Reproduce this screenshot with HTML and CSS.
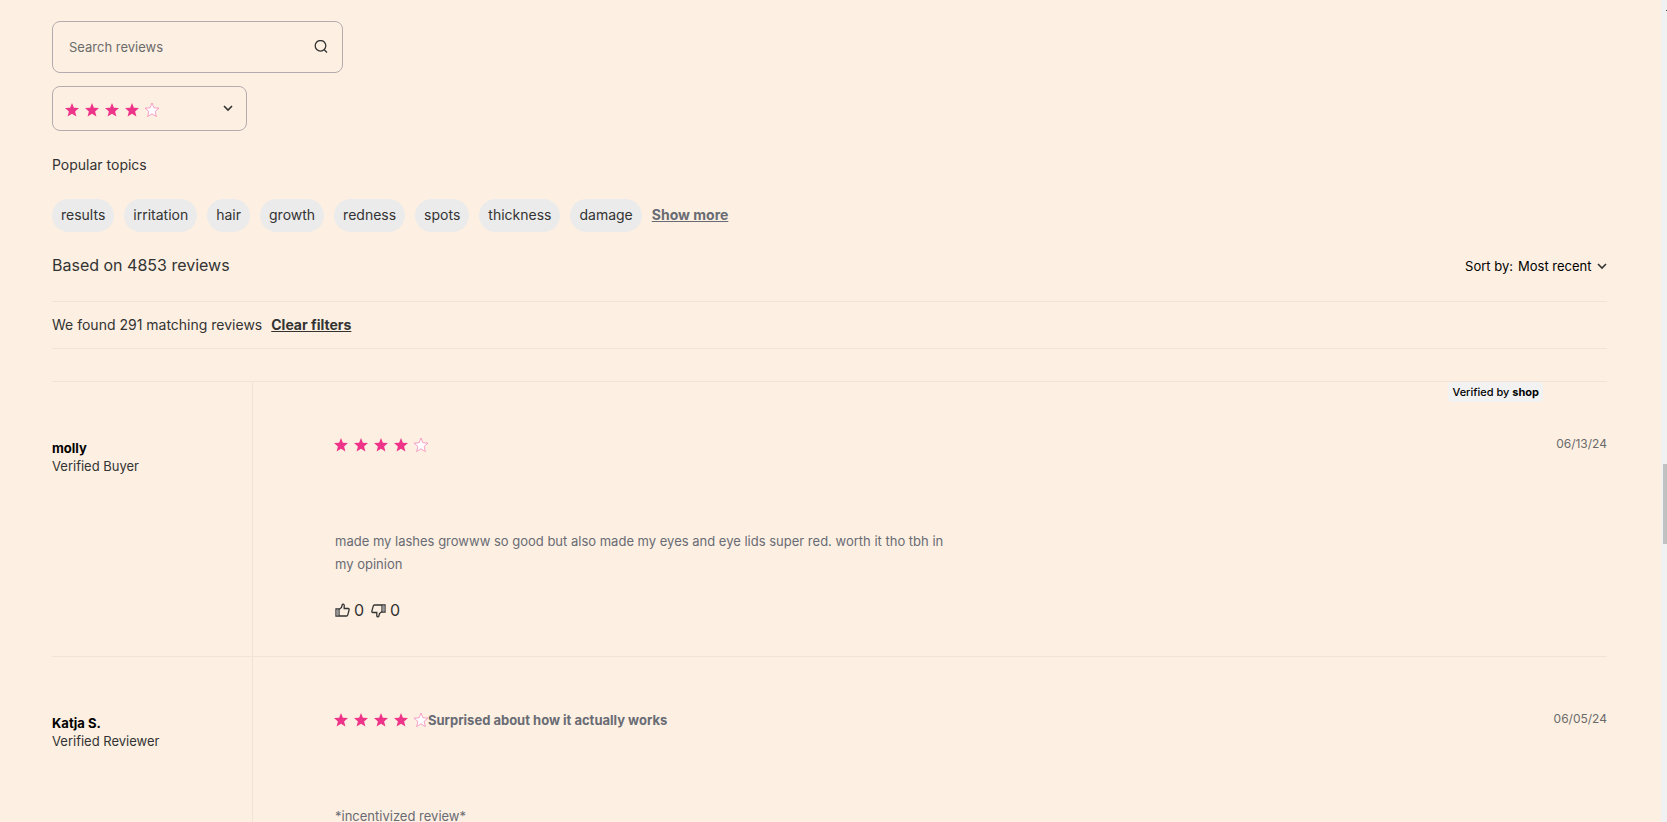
FILE: index.html
```html
<!DOCTYPE html>
<html lang="en">
<head>
<meta charset="UTF-8">
<meta name="viewport" content="width=device-width, initial-scale=1.0">
<title>Reviews</title>
<link rel="stylesheet" href="styles.css">
</head>
<body>
<svg class="defs" aria-hidden="true">
    <symbol id="star" viewBox="0 0 14 14"><path d="M7 0 8.9 4.8 14 5.1 10.1 8.4 11.4 13.6 7 10.8 2.6 13.6 3.9 8.4 0 5.1 5.1 4.8Z"/></symbol>
    <symbol id="thumb" viewBox="0 0 15 15"><path d="M1 6H4V13H1ZM4 6.5 6.5 4.5 7.3 1.5C7.6.8 9.2 1 9.2 2.3V5.5H13.2C14 5.5 14.3 6 14.1 6.8L12.8 11.8C12.6 12.6 12.2 13 11.5 13H4"/><path class="cuff" d="M1.5 6.5H3.5V12.5H1.5Z"/></symbol>
    <symbol id="chevron" viewBox="0 0 10 10"><path d="M1 3 5 7 9 3"/></symbol>
</svg>
<div class="page">
    <main class="reviews">
        <!-- filters -->
        <form class="filters">
            <div class="search">
                <input type="search" placeholder="Search reviews" aria-label="Search reviews">
                <button type="button" aria-label="Search">
                    <svg width="14" height="14" viewBox="0 0 14 14"><circle cx="6.5" cy="5.8" r="5.3"/><path d="M10.3 9.8 13 12.5"/></svg>
                </button>
            </div>
            <div class="rating">
                <select aria-label="Rating">
                    <option>5 stars</option>
                    <option selected>4 stars</option>
                    <option>3 stars</option>
                    <option>2 stars</option>
                    <option>1 star</option>
                </select>
                <span class="rating-value">
                    <span class="stars"><svg><use href="#star"/></svg><svg><use href="#star"/></svg><svg><use href="#star"/></svg><svg><use href="#star"/></svg><svg class="empty"><use href="#star"/></svg></span>
                    <svg class="chevron"><use href="#chevron"/></svg>
                </span>
            </div>
        </form>

        <h2>Popular topics</h2>
        <div class="topics">
            <button type="button">results</button>
            <button type="button">irritation</button>
            <button type="button">hair</button>
            <button type="button">growth</button>
            <button type="button">redness</button>
            <button type="button">spots</button>
            <button type="button">thickness</button>
            <button type="button">damage</button>
            <a href="#">Show more</a>
        </div>

        <div class="summary">
            <p>Based on 4853 reviews</p>
            <div class="sort">
                <label for="sort">Sort by:</label>
                <select id="sort">
                    <option>Most recent</option>
                </select>
                <svg class="chevron"><use href="#chevron"/></svg>
            </div>
        </div>
        <div class="found">
            <span>We found 291 matching reviews</span>
            <a href="#">Clear filters</a>
        </div>

        <!-- review list -->
        <div class="list">
            <article class="review">
                <div class="author">
                    <h3>molly</h3>
                    <p>Verified Buyer</p>
                </div>
                <div class="content">
                    <span class="badge">Verified by <b>shop</b></span>
                    <div class="head">
                        <span class="stars" role="img" aria-label="4 out of 5"><svg><use href="#star"/></svg><svg><use href="#star"/></svg><svg><use href="#star"/></svg><svg><use href="#star"/></svg><svg class="empty"><use href="#star"/></svg></span>
                        <time datetime="2024-06-13">06/13/24</time>
                    </div>
                    <p class="text">made my lashes growww so good but also made my eyes and eye lids super red. worth it tho tbh in my opinion</p>
                    <div class="votes">
                        <button type="button" aria-label="Helpful"><svg><use href="#thumb"/></svg>0</button>
                        <button type="button" aria-label="Not helpful"><svg class="down"><use href="#thumb"/></svg>0</button>
                    </div>
                </div>
            </article>
            <article class="review">
                <div class="author">
                    <h3>Katja S.</h3>
                    <p>Verified Reviewer</p>
                </div>
                <div class="content">
                    <div class="head">
                        <span class="stars" role="img" aria-label="4 out of 5"><svg><use href="#star"/></svg><svg><use href="#star"/></svg><svg><use href="#star"/></svg><svg><use href="#star"/></svg><svg class="empty"><use href="#star"/></svg></span>
                        <h4>Surprised about how it actually works</h4>
                        <time datetime="2024-06-05">06/05/24</time>
                    </div>
                    <p class="text">*incentivized review*</p>
                </div>
            </article>
        </div>
    </main>
    <div class="scrollbar"><div class="arrow"></div><div class="thumb"></div></div>
</div>
</body>
</html>
```
FILE: styles.css
```css
* {box-sizing:border-box;}
body {margin:0;background:#fdf0e2;color:#333;font-family:"ITC Avant Garde Gothic","Century Gothic","Inter","Liberation Sans",sans-serif;font-size:14px;line-height:18px;}
h2,h3,h4,p {margin:0;font-size:inherit;font-weight:normal;}
button,input,select {font:inherit;color:inherit;background:none;border:none;padding:0;margin:0;}
button,select {cursor:pointer;}
select {appearance:none;}
a {color:inherit;font-weight:bold;text-decoration:underline;}
.defs {position:absolute;width:0;height:0;}

.page {display:flex;height:100vh;overflow:hidden;}
.reviews {flex:1;padding:21px 54px 0 52px;}

/* filters */
.filters {display:flex;flex-direction:column;gap:13px;}
.search {display:flex;align-items:center;width:291px;height:52px;padding:0 14px 0 16px;border:1px solid #b4abae;border-radius:8px;}
.search input {flex:1;min-width:0;font-size:13px;outline:none;}
.search input::placeholder {color:#6b6b6b;opacity:1;}
.search svg {display:block;fill:none;stroke:#333;stroke-width:1.3;}
.rating {position:relative;width:195px;height:45px;}
.rating select {width:100%;height:100%;border:1px solid #b4abae;border-radius:8px;color:transparent;}
.rating option {color:#333;}
.rating-value {position:absolute;inset:0;display:flex;align-items:flex-start;justify-content:space-between;padding:17px 14px 0 13px;pointer-events:none;}
.stars {display:flex;gap:6px;}
.stars svg {width:14px;height:14px;fill:#ee3488;}
.stars .empty {fill:#fff;stroke:#f48abb;stroke-width:.8;overflow:visible;}
.chevron {width:10px;height:10px;fill:none;stroke:#333;stroke-width:1.6;}

/* topics */
h2 {margin-top:25px;}
.topics {display:flex;align-items:center;gap:10px;margin-top:25px;}
.topics button {height:33px;padding:0 9px 2px;border-radius:17px;background:#ebebeb;}
.topics a {padding-bottom:2px;color:#696b74;}

.summary {display:flex;align-items:baseline;justify-content:space-between;height:47px;margin-top:22px;padding-top:2px;}
.summary p {font-size:16px;}
.sort {display:flex;align-items:center;gap:5px;font-size:13px;color:#000;}
.found {display:flex;align-items:center;gap:9px;height:48px;border-top:1px solid #f0e4d8;border-bottom:1px solid #f0e4d8;}

/* review list */
.list {margin-top:32px;}
.review {display:flex;height:275px;border-top:1px solid #f0e4d8;}
.author {width:201px;padding-top:57px;border-right:1px solid #f0e4d8;font-size:13px;}
.author h3 {font-weight:bold;color:#000;}
.content {position:relative;flex:1;padding:53px 0 0 81px;}
.badge {position:absolute;top:0;right:64px;padding:0 4px;border-radius:4px;background:#f2f2f2;color:#000;font-size:11px;font-weight:500;line-height:20px;}
.head {display:flex;align-items:center;height:20px;}
.head h4 {font-size:13px;font-weight:bold;color:#696b74;}
.head time {margin-left:auto;padding-bottom:3px;font-size:12px;color:#6b6b6b;}
.text,.votes {padding-left:1px;}
.text {max-width:620px;margin-top:75px;color:#696b74;font-size:13px;line-height:23px;}
.votes {display:flex;gap:7px;margin-top:25px;}
.votes button {display:flex;align-items:center;gap:4px;font-size:16px;}
.votes svg {width:15px;height:15px;fill:none;stroke:#333;stroke-width:1.3;}
.votes .down {transform:rotate(180deg);}
.cuff {fill:#999;stroke:none;}

/* scrollbar */
.scrollbar {width:6px;padding-left:2px;background:#f1f1f1;}
.arrow {width:1px;height:1px;margin:10px 0 0 auto;background:#505050;}
.thumb {height:80px;margin-top:453px;background:#c1c1c1;}
```
